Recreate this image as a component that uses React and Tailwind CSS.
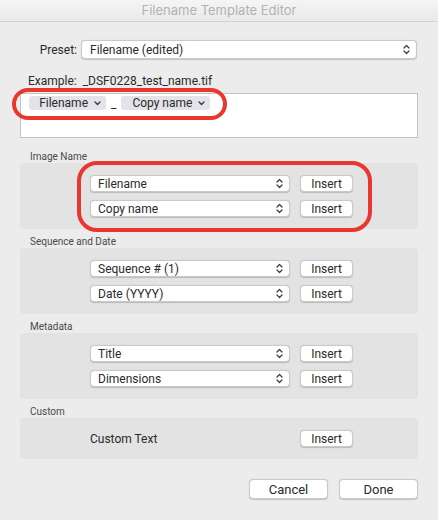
import React from 'react';

const font = { fontFamily: 'Roboto, "Liberation Sans", sans-serif' };
const titleFont = { fontFamily: 'Inter, "Liberation Sans", sans-serif' };

function Chevrons() {
  return (
    <svg width="7" height="11" viewBox="0 0 7 11" className="shrink-0">
      <path d="M1 4 L3.5 1.5 L6 4 M1 7 L3.5 9.5 L6 7" fill="none" stroke="#3a3a3a" strokeWidth="1.2" strokeLinecap="round" strokeLinejoin="round" />
    </svg>
  );
}

function Popup({ label, className = '' }) {
  return (
    <div className={`flex items-center justify-between bg-white rounded-[4px] border border-[#c9c9c9] shadow-[0_0.5px_1px_rgba(0,0,0,0.18)] pl-[7px] pr-[6px] ${className}`}>
      <span className="leading-none">{label}</span>
      <Chevrons />
    </div>
  );
}

function Button({ children, className = '' }) {
  return (
    <div className={`flex items-center justify-center bg-white rounded-[4px] border border-[#c9c9c9] shadow-[0_0.5px_1px_rgba(0,0,0,0.18)] leading-none ${className}`}>
      {children}
    </div>
  );
}

function Token({ label, className = '' }) {
  return (
    <div className={`flex items-center justify-end gap-[6px] h-[14px] bg-[#e3e3e9] rounded-[3px] pr-[5px] ${className}`}>
      <span className="leading-none">{label}</span>
      <svg width="7" height="5" viewBox="0 0 7 5">
        <path d="M1 1 L3.5 3.5 L6 1" fill="none" stroke="#3a3a3a" strokeWidth="1.3" strokeLinecap="round" strokeLinejoin="round" />
      </svg>
    </div>
  );
}

function Section({ title, rows }) {
  return (
    <div>
      <div className="text-[10px] leading-[13px] text-[#4a4a4a] pl-[10px]">{title}</div>
      <div className="bg-[#e3e3e3] rounded-[4px] py-[12px] pl-[70px] flex flex-col gap-[8px]">
        {rows.map((r) => (
          <div key={r} className="flex items-center gap-[10px]">
            <Popup label={r} className="w-[200px] h-[17px]" />
            <Button className="w-[53px] h-[17px]">Insert</Button>
          </div>
        ))}
      </div>
    </div>
  );
}

export default function App() {
  return (
    <div className="relative w-[438px] h-[520px] bg-[#ececec] text-[12px] text-[#2a2a2a] overflow-hidden" style={font}>
      {/* Title bar */}
      <div className="h-[22px] flex items-center justify-center bg-gradient-to-b from-[#f5f5f5] to-[#e9e9e9] border-b border-[#d3d3d3] text-[13px] text-[#b3b3b3]" style={titleFont}>
        Filename Template Editor
      </div>

      <div className="px-[20px]">
        {/* Preset */}
        <div className="flex items-center mt-[18px]">
          <div className="w-[61px] text-right pr-[4px] leading-none">Preset:</div>
          <Popup label="Filename (edited)" className="w-[336px] h-[19px] pl-[8px]" />
        </div>

        <div className="mt-[14px] pl-[8px] leading-[16px]">Example:&nbsp; _DSF0228_test_name.tif</div>

        {/* Token field */}
        <div className="mt-[4px] h-[45px] bg-white border border-[#c4c4c4] pl-[8px] pt-[2px] flex items-start gap-[5px]">
          <Token label="Filename" className="w-[77px]" />
          <span className="leading-[16px]">_</span>
          <Token label="Copy name" className="w-[89px]" />
        </div>

        <div className="mt-[12px] flex flex-col gap-[6px]">
          <Section title="Image Name" rows={['Filename', 'Copy name']} />
          <Section title="Sequence and Date" rows={['Sequence # (1)', 'Date (YYYY)']} />
          <Section title="Metadata" rows={['Title', 'Dimensions']} />
          <div>
            <div className="text-[10px] leading-[13px] text-[#4a4a4a] pl-[10px]">Custom</div>
            <div className="bg-[#e3e3e3] rounded-[4px] py-[12px] pl-[70px] flex items-center">
              <div className="w-[210px] leading-none">Custom Text</div>
              <Button className="w-[53px] h-[17px]">Insert</Button>
            </div>
          </div>
        </div>

        {/* Bottom buttons */}
        <div className="mt-[20px] flex justify-end gap-[11px]">
          <Button className="w-[79px] h-[20px] text-[13px]">Cancel</Button>
          <Button className="w-[79px] h-[20px] text-[13px]">Done</Button>
        </div>
      </div>

      {/* Red annotations */}
      <div className="absolute left-[12px] top-[88px] w-[215px] h-[32px] border-[4px] border-[#e8372f] rounded-[16px]" />
      <div className="absolute left-[77px] top-[161px] w-[295px] h-[71px] border-[4px] border-[#e8372f] rounded-[20px]" />
    </div>
  );
}
